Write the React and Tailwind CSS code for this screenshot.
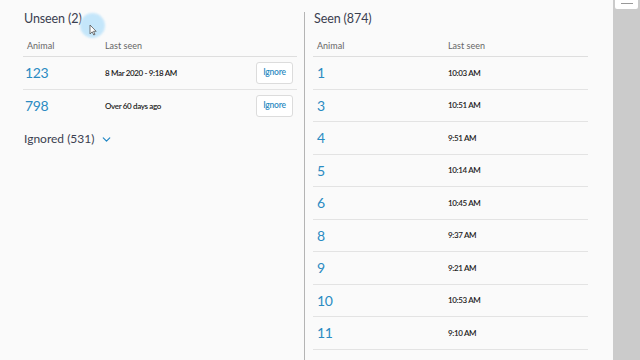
import { ChevronDown } from 'lucide-react';

const unseen = [
  { id: '123', last: '8 Mar 2020 - 9:18 AM' },
  { id: '798', last: 'Over 60 days ago' },
];

const seen = [
  { id: '1', last: '10:03 AM' },
  { id: '3', last: '10:51 AM' },
  { id: '4', last: '9:51 AM' },
  { id: '5', last: '10:14 AM' },
  { id: '6', last: '10:45 AM' },
  { id: '8', last: '9:37 AM' },
  { id: '9', last: '9:21 AM' },
  { id: '10', last: '10:53 AM' },
  { id: '11', last: '9:10 AM' },
];

const font = { fontFamily: '"Lato", "Noto Sans", sans-serif' };

const App = () => {
  return (
    <div className="relative flex h-[360px] w-[640px] overflow-hidden bg-[#fafafa] text-[#333]" style={font}>
      <div className="flex flex-1 pt-3">
        {/* Unseen column */}
        <div className="w-[305px] border-r border-[#b4b4b4] pl-[23px] pr-[7px]">
          <h2 className="pl-px text-[12.5px] leading-[13px] tracking-[-0.1px] text-[#3a4050]">Unseen (2)</h2>
          <div className="mt-[16px] flex border-b border-[#dedede] pb-[5px] text-[9px] leading-[10px] text-[#666]">
            <div className="w-[82px] pl-[4px]">Animal</div>
            <div>Last seen</div>
          </div>
          {unseen.map((row, i) => (
            <div
              key={row.id}
              className={`flex h-[32.5px] items-center ${i === 0 ? 'border-b border-[#e3e3e3]' : ''}`}
            >
              <div className="w-[82px] pl-[2px] text-[14px] tracking-[-0.4px] text-[#2b8bc2]">{row.id}</div>
              <div className="flex-1 text-[8px] font-semibold tracking-[-0.35px] text-[#222]">{row.last}</div>
              <button className="mr-[4px] h-[22px] w-[37px] rounded-[3px] border border-[#dcdcdc] bg-white text-[8.5px] font-semibold tracking-[-0.2px] text-[#2b8bc2]">
                Ignore
              </button>
            </div>
          ))}
          <div className="mt-[8px] flex items-center gap-[6px] pl-px text-[12px] text-[#3a4050]">
            <span>Ignored (531)</span>
            <ChevronDown className="h-[13px] w-[13px] text-[#1f86c4]" strokeWidth={2.2} />
          </div>
        </div>

        {/* Seen column */}
        <div className="w-[308px] pl-[8px] pr-[25px]">
          <h2 className="pl-px text-[12.5px] leading-[13px] tracking-[-0.1px] text-[#3a4050]">Seen (874)</h2>
          <div className="mt-[16px] flex border-b border-[#dedede] pb-[5px] text-[9px] leading-[10px] text-[#666]">
            <div className="w-[135px] pl-[4px]">Animal</div>
            <div>Last seen</div>
          </div>
          {seen.map(row => (
            <div key={row.id} className="flex h-[32.5px] items-center border-b border-[#e3e3e3]">
              <div className="w-[135px] pl-[4px] text-[14px] tracking-[-0.4px] text-[#2b8bc2]">{row.id}</div>
              <div className="text-[8px] font-semibold tracking-[-0.35px] text-[#222]">{row.last}</div>
            </div>
          ))}
        </div>
      </div>

      {/* scrollbar strip */}
      <div className="w-[27px] bg-[#cbcbcb] pl-[2px] pr-[2px]">
        <div className="flex h-[9px] items-start justify-center rounded-b-[2px] bg-white pt-[3px]">
          <div className="h-px w-[12px] bg-[#999]" />
        </div>
      </div>

      {/* click indicator */}
      <div className="pointer-events-none absolute left-[80px] top-[13px] h-[25px] w-[25px] rounded-full bg-[#bfe4fa] opacity-90 blur-[1px]" />
      <svg className="pointer-events-none absolute left-[89px] top-[24px]" width="8" height="12" viewBox="0 0 8 12">
        <path d="M1 1 L1 10 L3.2 7.8 L4.8 11 L6 10.4 L4.5 7.3 L7.2 7.3 Z" fill="#fff" stroke="#555" strokeWidth="0.8" />
      </svg>
    </div>
  );
};

export default App;
